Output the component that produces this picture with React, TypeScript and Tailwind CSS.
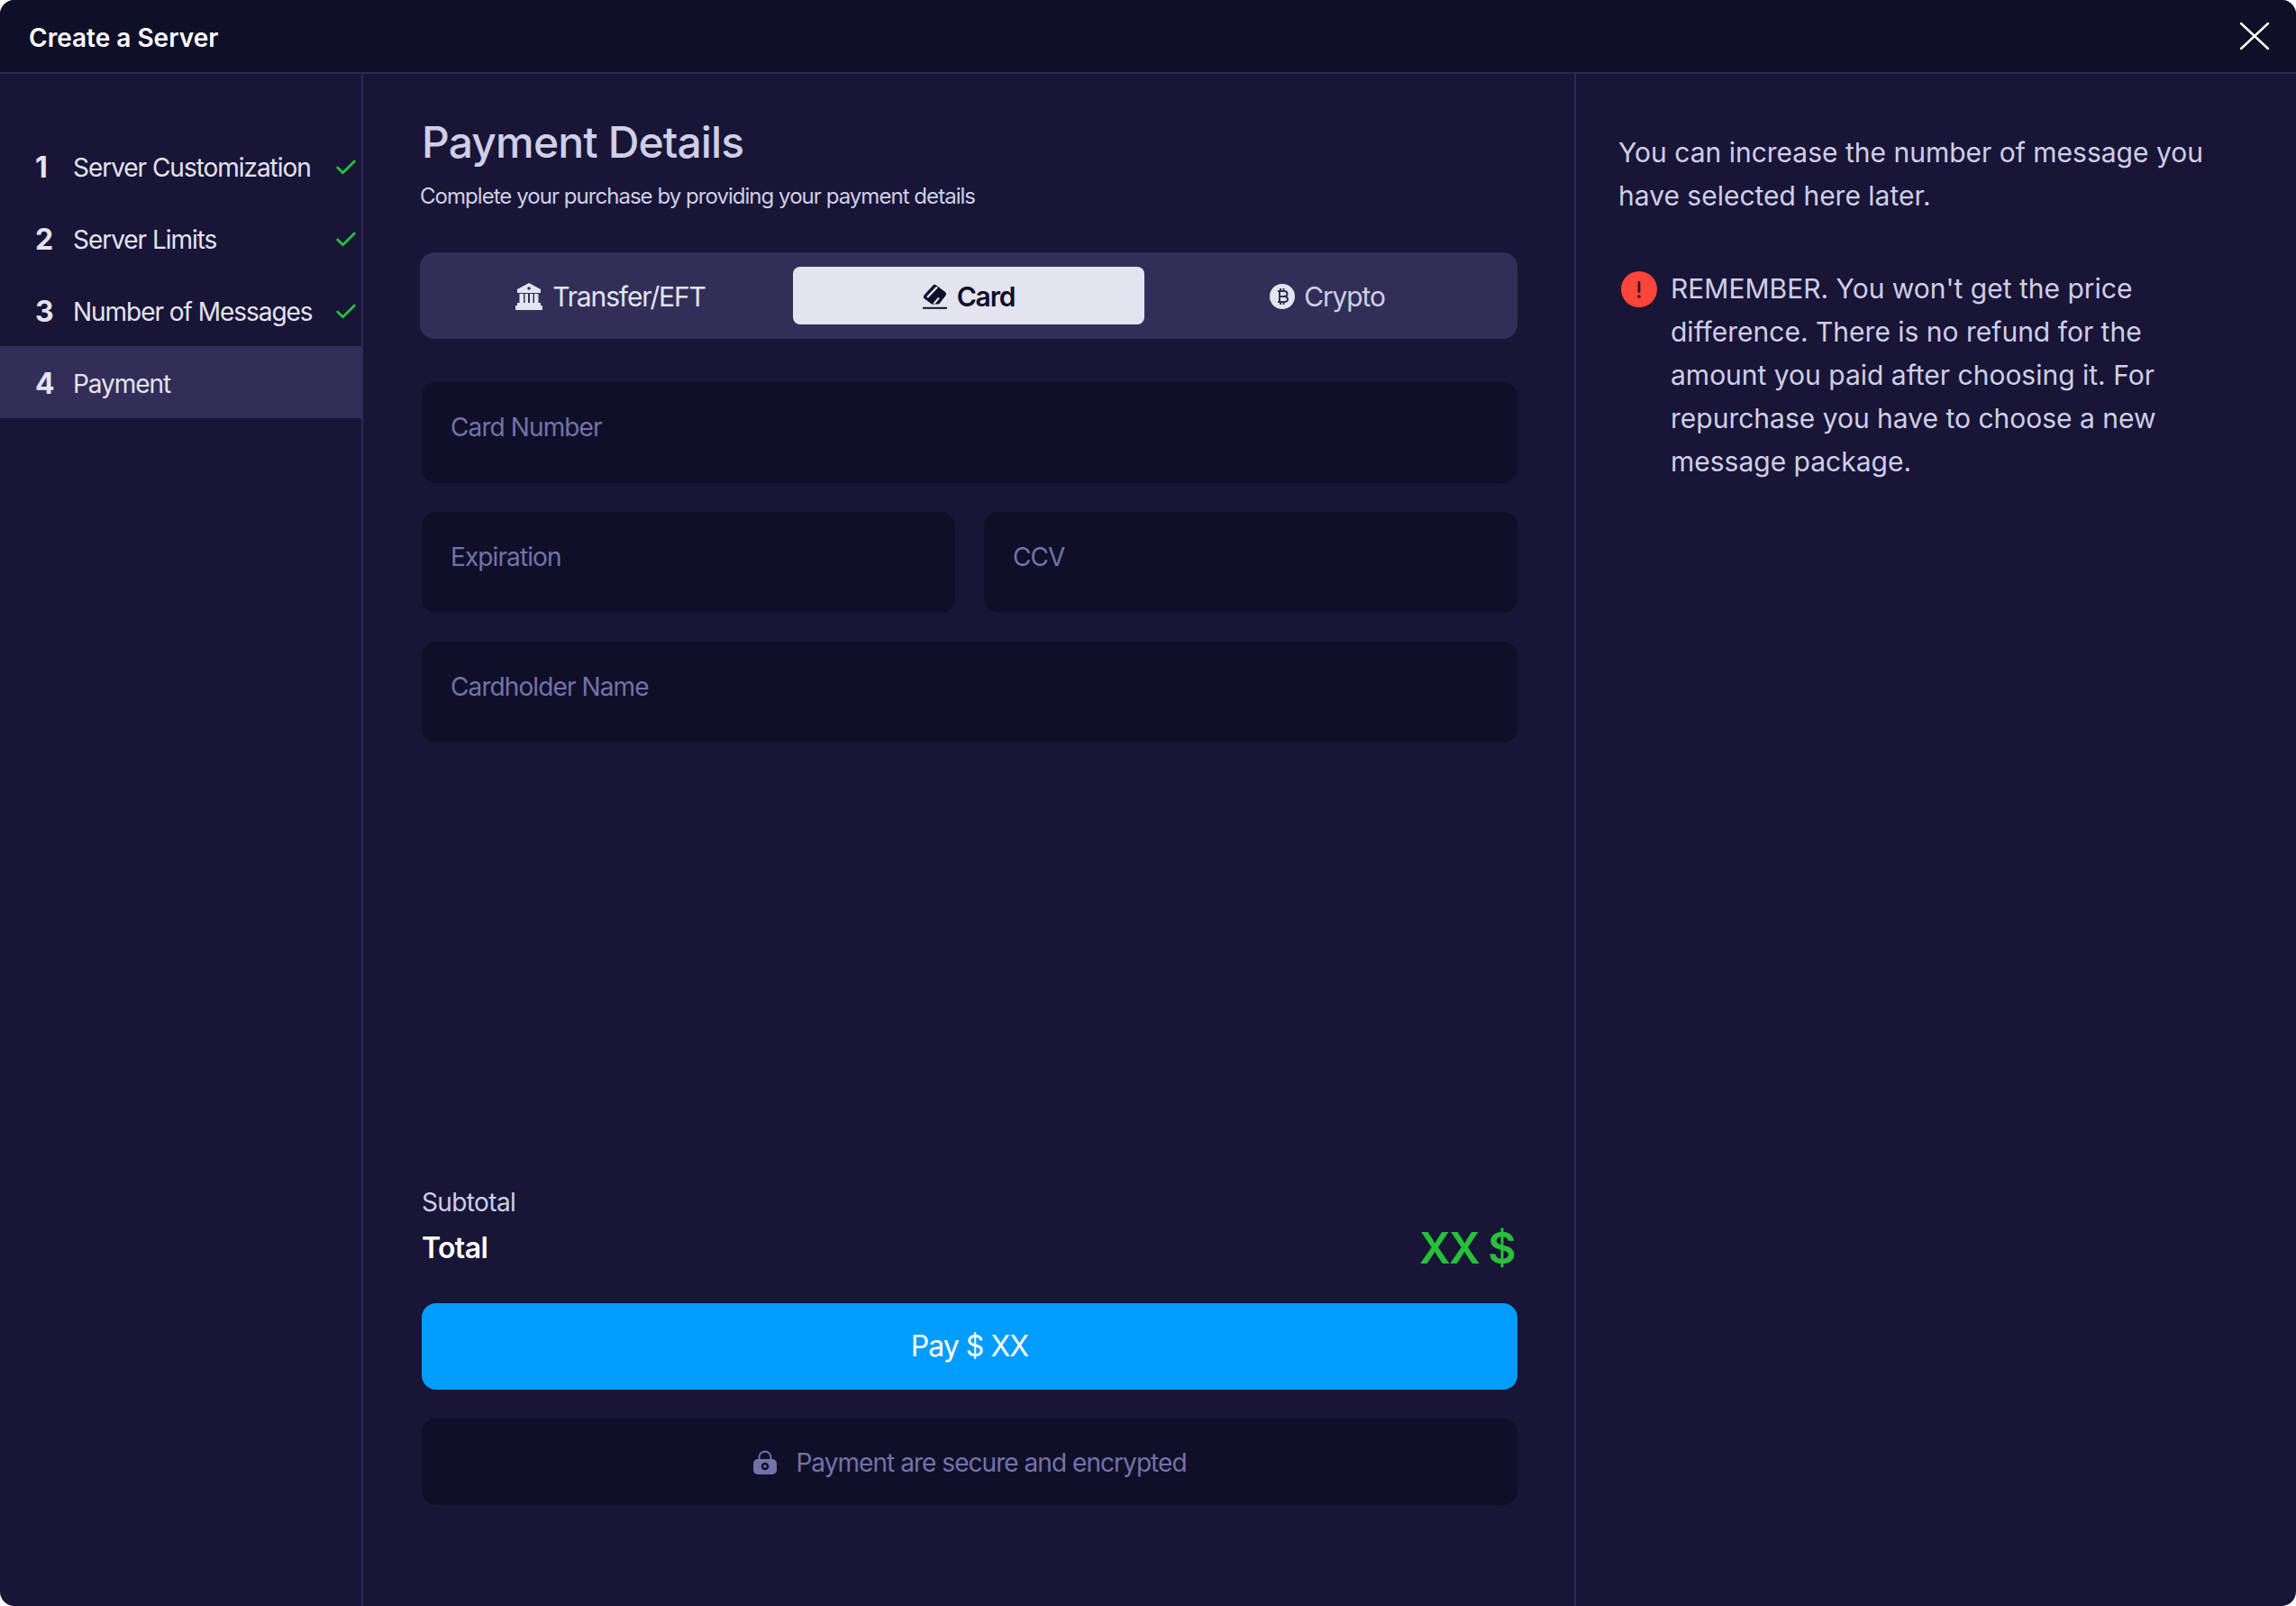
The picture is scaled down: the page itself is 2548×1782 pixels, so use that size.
import React from 'react';
import { Check } from 'lucide-react';

const STEPS = [
  { num: '1', label: 'Server Customization', done: true },
  { num: '2', label: 'Server Limits', done: true },
  { num: '3', label: 'Number of Messages', done: true },
  { num: '4', label: 'Payment', done: false },
];

const BankIcon = () => (
  <svg width="32" height="30" viewBox="0 0 32 30" fill="currentColor">
    <path d="M16 0 L29 7 V11 H3 V7 Z" />
    <circle cx="16" cy="6" r="1.8" fill="#322e58" />
    <rect x="5.5" y="12" width="4.5" height="10" />
    <rect x="11.5" y="12" width="3.5" height="10" />
    <rect x="17" y="12" width="3.5" height="10" />
    <rect x="22" y="12" width="4.5" height="10" />
    <rect x="3" y="22" width="26" height="3" />
    <rect x="1" y="25" width="30" height="5" rx="1" />
  </svg>
);

const CardIcon = () => (
  <svg width="28" height="28" viewBox="0 0 28 28" fill="none">
    <path d="M1.5 12.5 L11 2 Q13 0 15 1.5 L25 9 Q27 11 25.5 13 L18 22.5 H10 L2 16.5 Q0 14.5 1.5 12.5 Z" fill="currentColor" />
    <path d="M5 15 L16 3.5" stroke="#e4e4f1" strokeWidth="2.5" />
    <path d="M12.5 22 L18 15.5" stroke="#e4e4f1" strokeWidth="2" />
    <path d="M0 26.8 H27" stroke="currentColor" strokeWidth="2" />
  </svg>
);

const CoinIcon = () => (
  <svg width="28" height="28" viewBox="0 0 28 28">
    <circle cx="14" cy="14" r="14" fill="#e4e4f1" />
    <path d="M9 8 H16 Q19.5 8 19.5 11 Q19.5 14 16 14 H10.5 M16 14 Q20 14 20 17 Q20 20 16 20 H9 M11 8 V20 M12 5 V8 M15.5 5 V8 M12 20 V23 M15.5 20 V23" stroke="#322e58" strokeWidth="2" fill="none" />
  </svg>
);

const LockIcon = () => (
  <svg width="28" height="28" viewBox="0 0 28 28">
    <path d="M7.5 12 V8 A6.5 6.5 0 0 1 20.5 8 V12" stroke="#7372ab" strokeWidth="2" fill="none" />
    <rect x="1" y="10" width="26" height="17" rx="5" fill="#7372ab" />
    <circle cx="14" cy="18" r="3" fill="none" stroke="#100f28" strokeWidth="2.5" />
  </svg>
);

const AlertIcon = () => (
  <svg width="40" height="40" viewBox="0 0 40 40">
    <circle cx="20" cy="20" r="20" fill="#ff4438" />
    <rect x="18.6" y="11" width="2.8" height="13" rx="1.4" fill="#181537" />
    <circle cx="20" cy="28" r="1.8" fill="#181537" />
  </svg>
);

const CloseIcon = () => (
  <svg width="34" height="32" viewBox="0 0 34 32" fill="none">
    <path d="M2 2 L32 30 M32 2 L2 30" stroke="white" strokeWidth="2.4" strokeLinecap="round" />
  </svg>
);

const Field = ({ placeholder, className }: { placeholder: string; className?: string }) => (
  <div className={`h-28 rounded-2xl bg-[#100f28] px-8 pt-[33px] text-[28px] leading-[34px] tracking-[-0.032em] text-[#7372ab] ${className ?? ''}`}>
    {placeholder}
  </div>
);

export default function App() {
  return (
    <div className="flex h-screen flex-col overflow-hidden rounded-2xl bg-[#181537] font-['Inter',sans-serif]">
      {/* Header */}
      <div className="flex h-[82px] shrink-0 items-center justify-between border-b-2 border-[#2c2a55] bg-[#100f28] pl-8 pr-[29px]">
        <h1 className="pt-1 text-[28px] font-semibold text-white">Create a Server</h1>
        <CloseIcon />
      </div>

      <div className="flex min-h-0 flex-1">
        {/* Steps */}
        <div className="w-[403px] shrink-0 border-r-2 border-[#2c2a55] pt-[62px]">
          {STEPS.map((step) => (
            <div key={step.num} className={`flex h-20 items-center pt-1 ${step.num === '4' ? 'bg-[#322e58]' : ''}`}>
              <span className="ml-[39px] w-[42px] text-[32px] font-bold text-[#e4e4f1]">{step.num}</span>
              <span className="flex-1 text-[28px] tracking-[-0.037em] text-[#e4e4f1]">{step.label}</span>
              {step.done && <Check size={28} strokeWidth={2.4} className="mr-[3px] text-[#27c03a]" />}
            </div>
          ))}
        </div>

        {/* Payment form */}
        <div className="flex w-[1346px] shrink-0 flex-col border-r-2 border-[#2c2a55] pl-[65px] pr-[63px]">
          <h2 className="mt-[42px] text-5xl font-medium leading-[68px] tracking-[-0.018em] text-[#cfcfe6]">Payment Details</h2>
          <p className="-ml-0.5 mt-[10px] text-2xl leading-[32px] tracking-[-0.04em] text-[#cfcfe6]">
            Complete your purchase by providing your payment details
          </p>

          <div className="-ml-0.5 mt-[46px] flex h-24 gap-2 rounded-2xl bg-[#322e58] p-4 text-[30px] tracking-[-0.038em]">
            <div className="flex flex-1 items-center justify-center gap-2.5 pt-0.5 text-[#e4e4f1]">
              <BankIcon />
              Transfer/EFT
            </div>
            <div className="flex flex-1 items-center justify-center gap-2.5 rounded-lg bg-[#e4e4f1] pt-0.5 font-semibold text-[#100f28]">
              <CardIcon />
              Card
            </div>
            <div className="flex flex-1 items-center justify-center gap-2.5 pt-0.5 text-[#cfcfe6]">
              <CoinIcon />
              Crypto
            </div>
          </div>

          <div className="mt-12 flex flex-col gap-8">
            <Field placeholder="Card Number" />
            <div className="flex gap-8">
              <Field placeholder="Expiration" className="flex-1" />
              <Field placeholder="CCV" className="flex-1" />
            </div>
            <Field placeholder="Cardholder Name" />
          </div>

          <div className="mt-auto text-[28px] leading-[34px] tracking-[-0.022em] text-[#cfcfe6]">Subtotal</div>
          <div className="mt-[10px] flex h-12 items-center justify-between">
            <span className="text-[32px] font-semibold tracking-[-0.02em] text-white">Total</span>
            <span className="mr-[3px] text-5xl font-semibold tracking-[-0.033em] text-[#27c03a]">XX $</span>
          </div>
          <button className="mt-[37px] h-24 rounded-2xl bg-[#009dff] text-[32px] tracking-[-0.03em] text-white">Pay $ XX</button>
          <div className="mb-28 mt-8 flex h-24 items-center justify-center gap-5 rounded-2xl bg-[#100f28] pt-0.5 text-[28px] tracking-[-0.034em] text-[#7372ab]">
            <LockIcon />
            Payment are secure and encrypted
          </div>
        </div>

        {/* Notes */}
        <div className="flex-1 pl-[47px] pr-[64px] pt-[63px] text-[30px] leading-[48px] text-[#cfcfe6]">
          <p>You can increase the number of message you have selected here later.</p>
          <div className="mt-[59px] flex gap-[15px]">
            <div className="ml-[3px] shrink-0 pt-[1px]">
              <AlertIcon />
            </div>
            <p className="-mt-1">
              REMEMBER. You won't get the price difference. There is no refund for the amount you paid after choosing it. For repurchase you have to choose a new message package.
            </p>
          </div>
        </div>
      </div>
    </div>
  );
}
